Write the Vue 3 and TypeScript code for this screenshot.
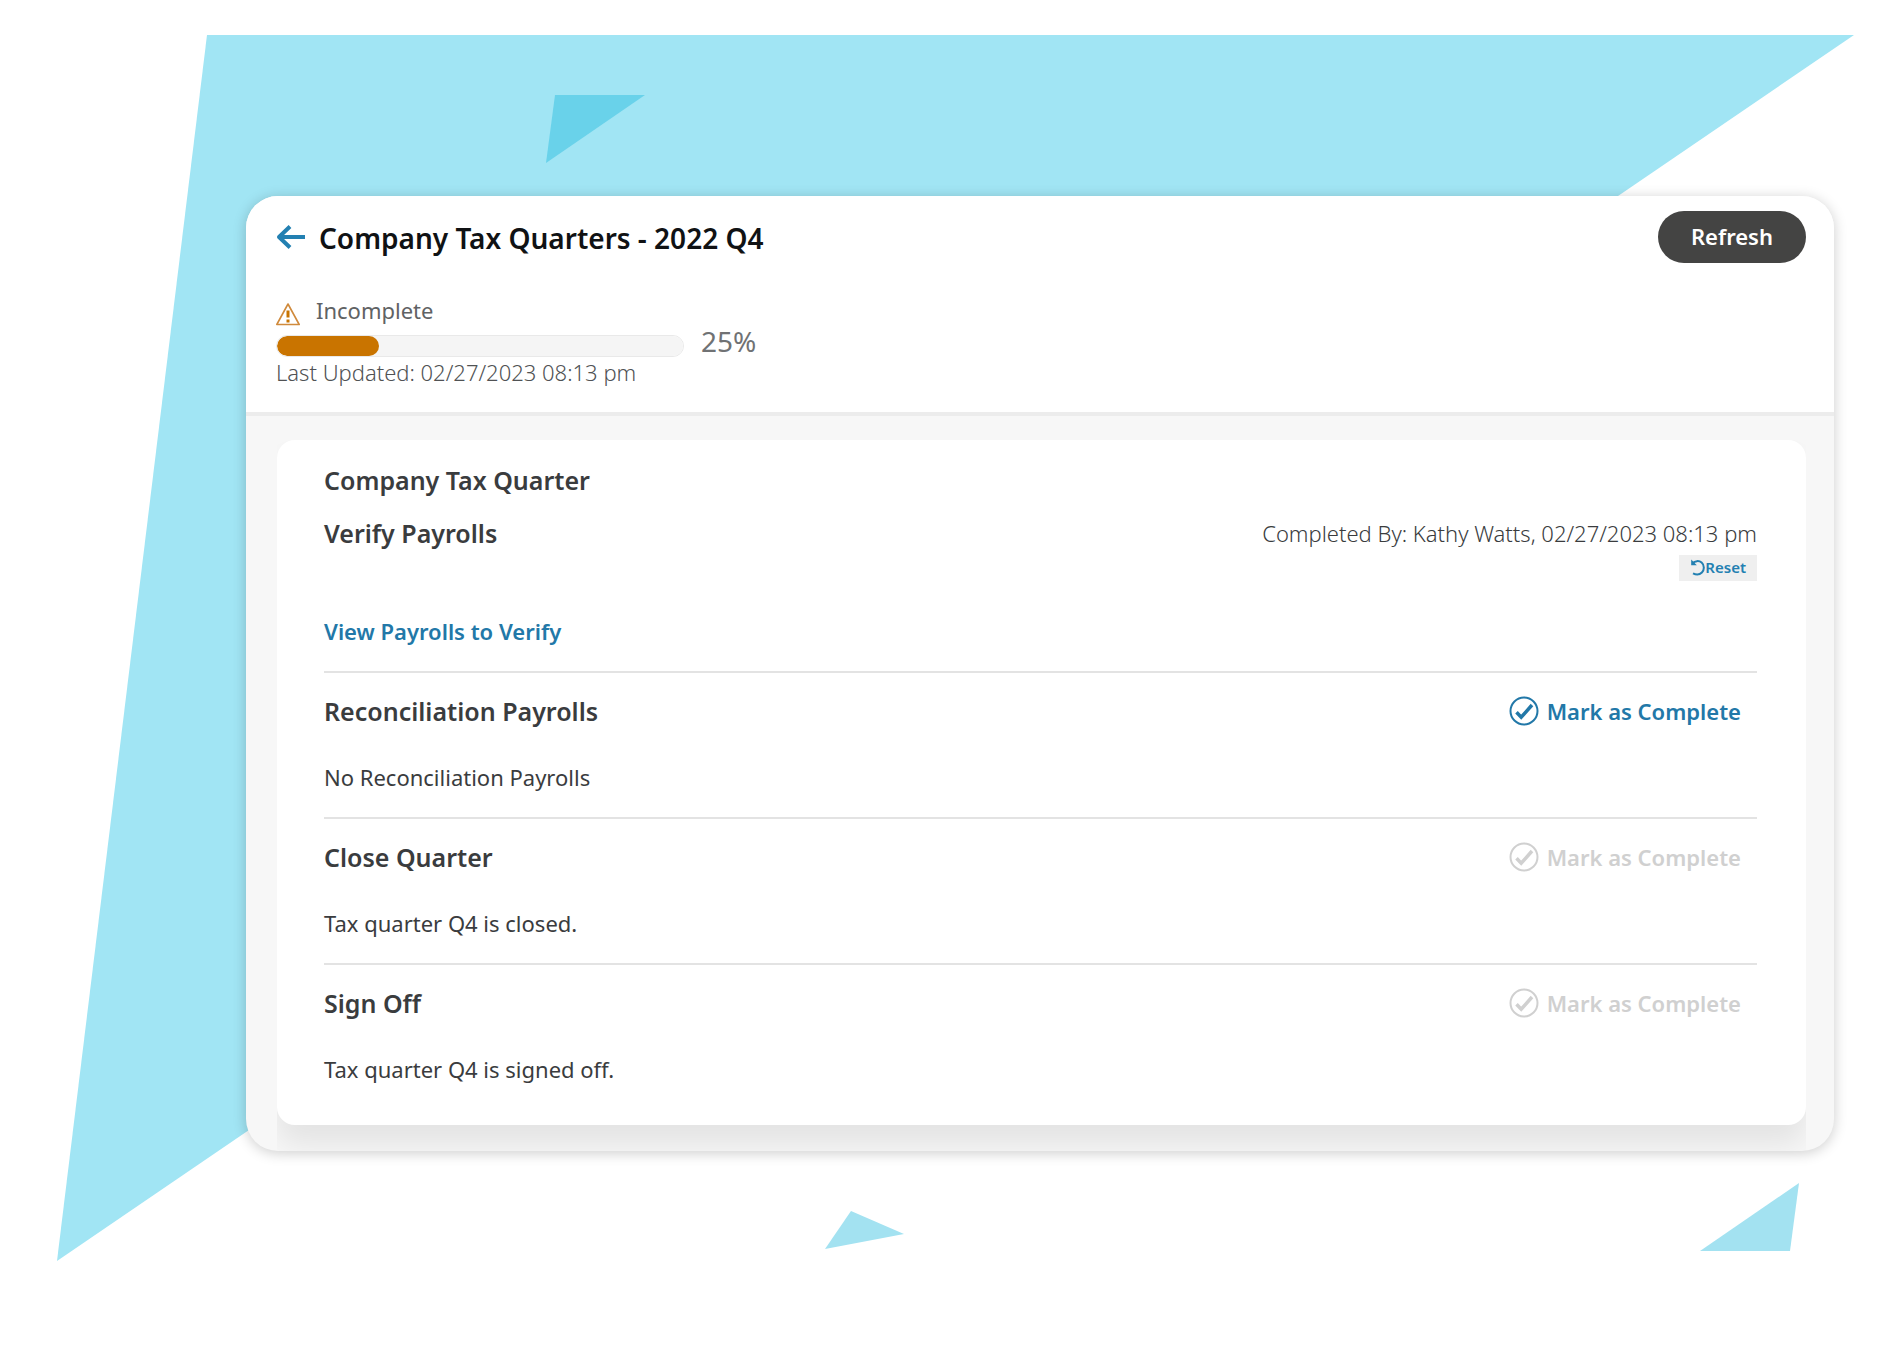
<script setup lang="ts">
interface Step {
  title: string
  note: string
  enabled: boolean
}

const percent = 25

const steps: Step[] = [
  { title: 'Reconciliation Payrolls', note: 'No Reconciliation Payrolls', enabled: true },
  { title: 'Close Quarter', note: 'Tax quarter Q4 is closed.', enabled: false },
  { title: 'Sign Off', note: 'Tax quarter Q4 is signed off.', enabled: false },
]
</script>

<template>
  <div class="page">
    <svg class="shapes" viewBox="0 0 1886 1363" aria-hidden="true">
      <polygon points="207,35 1854,35 57,1261" fill="#a1e5f4" />
      <polygon points="555,95 645,95 546,163" fill="#69d2ea" />
      <polygon points="851,1211 904,1234 825,1249" fill="#a3e2f1" />
      <polygon points="1799,1183 1790,1251 1700,1251" fill="#a3e2f1" />
    </svg>

    <main class="window">
      <header class="head">
        <div class="title-row">
          <a class="back" href="#" aria-label="Back">
            <svg width="30" height="24" viewBox="0 0 30 24" fill="none" stroke="currentColor" stroke-width="4">
              <path d="M29 12H3M14 1.500L3 12l11 10.500" stroke-linejoin="round" />
            </svg>
          </a>
          <h1>Company Tax Quarters - 2022 Q4</h1>
          <button class="refresh" type="button">Refresh</button>
        </div>
        <div class="status">
          <svg width="24" height="24" viewBox="1 0 24 24" fill="none" aria-hidden="true">
            <path d="M13 2L24.200 22.500H1.800Z" stroke="#d08a3c" stroke-width="1.600" stroke-linejoin="round" />
            <path d="M13 8.500v7M13 17.500v3" stroke="#c97400" stroke-width="3" />
          </svg>
          <label for="quarter-progress">Incomplete</label>
        </div>
        <div class="progress-row">
          <progress id="quarter-progress" :value="percent" max="100"></progress>
          <span class="percent">{{ percent }}%</span>
        </div>
        <p class="updated">Last Updated: 02/27/2023 08:13 pm</p>
      </header>

      <div class="body">
        <section class="card">
          <h2>Company Tax Quarter</h2>
          <div class="step first">
            <div class="step-head">
              <h2>Verify Payrolls</h2>
              <div class="done">
                <p>Completed By: Kathy Watts, 02/27/2023 08:13 pm</p>
                <button class="reset" type="button">
                  <svg width="15" height="17" viewBox="0 0 15 17" fill="none" stroke="currentColor" aria-hidden="true">
                    <path d="M2.500 4.200C5 1.800 9 1.300 11.600 3.600c2.900 2.600 2.900 7.300.3 9.900-2.300 2.300-6 2.400-8.900.8" stroke-width="2" />
                    <path d="M1.200.5v5.700h5.600z" fill="currentColor" stroke="none" />
                  </svg>Reset
                </button>
              </div>
            </div>
            <a class="view" href="#">View Payrolls to Verify</a>
          </div>

          <div v-for="step in steps" :key="step.title" class="step">
            <div class="step-head">
              <h2>{{ step.title }}</h2>
              <button class="mark" type="button" :disabled="!step.enabled">
                <svg width="30" height="30" viewBox="0 0 30 30" fill="none" stroke="currentColor" aria-hidden="true">
                  <circle cx="15" cy="15" r="13.500" stroke-width="2" />
                  <path d="M7.500 16.200l4.700 5L23 9" stroke-width="3.500" />
                </svg>
                Mark as Complete
              </button>
            </div>
            <p class="note">{{ step.note }}</p>
          </div>
        </section>
      </div>
    </main>
  </div>
</template>

<style>
body {
  margin: 0;
  background: #fff;
}
</style>

<style scoped>
.page {
  position: relative;
  box-sizing: border-box;
  min-height: 100vh;
  padding: 196px 52px 200px 246px;
  font-family: "Noto Sans", "Open Sans", sans-serif;
  font-size: 22px;
  line-height: 32px;
  color: #3a3c3e;
}
.shapes {
  position: absolute;
  top: 0;
  left: 0;
  width: 100%;
}
.window {
  position: relative;
  overflow: hidden;
  border-radius: 32px;
  background: #f7f7f7;
  box-shadow: 0 2px 14px rgba(0, 0, 0, 0.2);
}
h1,
h2,
p {
  margin: 0;
}
button {
  font: inherit;
  font-weight: 600;
  border: 0;
  cursor: pointer;
}
svg {
  display: block;
  flex: none;
}
.head {
  padding: 15px 28px 24px 30px;
  background: #fff;
  border-bottom: 4px solid #ececec;
}
.title-row {
  display: flex;
  align-items: center;
  gap: 13px;
}
.back {
  color: #2380b2;
}
h1 {
  flex: 1;
  padding-top: 2px;
  font-size: 28px;
  font-weight: 600;
  color: #101214;
}
.refresh {
  height: 52px;
  padding: 0 33px 2px;
  border-radius: 26px;
  background: #444443;
  color: #fff;
}
.status {
  display: flex;
  align-items: center;
  gap: 16px;
  margin-top: 31px;
  color: #606264;
}
.status svg {
  margin-top: 8px;
}
.progress-row {
  display: flex;
  align-items: center;
  gap: 17px;
  height: 30px;
}
progress {
  appearance: none;
  box-sizing: border-box;
  width: 408px;
  height: 22px;
  margin-top: 10px;
  border: 1px solid #e9e9e9;
  border-radius: 11px;
  background: #f5f5f5;
  overflow: hidden;
}
progress::-webkit-progress-bar {
  background: #f5f5f5;
}
progress::-webkit-progress-value {
  background: #c97400;
  border-radius: 10px;
}
.percent {
  font-size: 28px;
  color: #707274;
}
.updated {
  font-weight: 300;
  color: #505254;
}
.body {
  padding: 24px 28px 26px 31px;
}
/* The shadow falls only below the card, cut off at its side edges. */
.card {
  padding: 24px 49px 40px 47px;
  border-radius: 18px;
  background: #fff;
  box-shadow: 0 20px 28px rgba(0, 0, 0, 0.08);
  clip-path: inset(0 0 -40px 0);
}
h2 {
  font-size: 25px;
  font-weight: 600;
}
.step {
  padding: 22px 0 24px;
  border-top: 2px solid #e3e3e3;
}
.step.first {
  padding-top: 21px;
  border-top: 0;
}
.step:last-child {
  padding-bottom: 0;
}
.step-head {
  display: flex;
  justify-content: space-between;
  align-items: flex-start;
}
.done {
  display: flex;
  flex-direction: column;
  align-items: flex-end;
  gap: 6px;
  margin-bottom: 34px;
  font-weight: 300;
}
.reset {
  display: flex;
  align-items: center;
  height: 26px;
  padding: 0 11px 2px;
  background: #efefef;
  color: #2380b2;
  font-size: 15px;
}
.view {
  font-weight: 600;
  color: #2278a8;
  text-decoration: none;
}
.mark {
  display: flex;
  align-items: center;
  gap: 8px;
  height: 32px;
  padding: 0 16px;
  background: none;
  color: #2278a8;
}
.mark:disabled {
  color: #d0d0d0;
  cursor: default;
}
.note {
  margin-top: 34px;
}
</style>
